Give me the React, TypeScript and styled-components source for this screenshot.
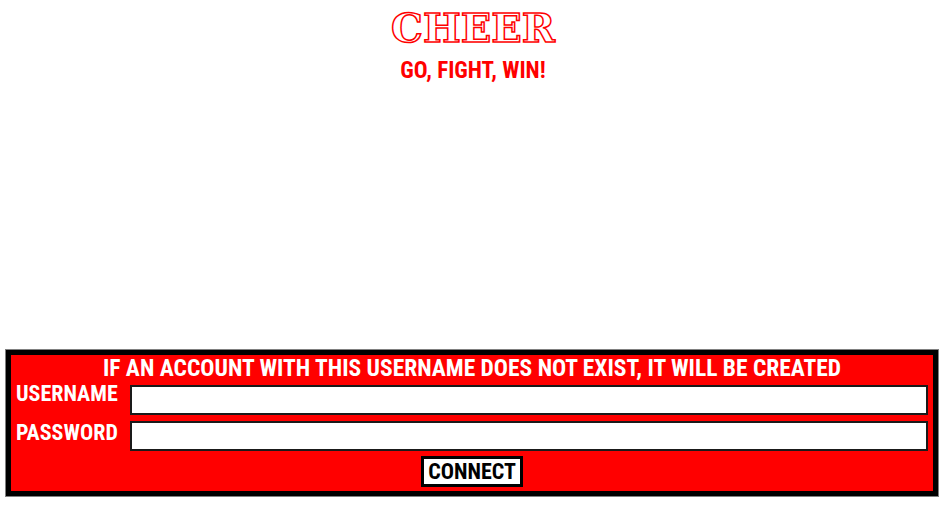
import styled, { createGlobalStyle } from "styled-components";

const GlobalStyle = createGlobalStyle`
  html, body {
    margin: 0;
    padding: 0;
    background: #ffffff;
  }
  body {
    font-family: "Roboto Condensed", Roboto, sans-serif;
    font-weight: 700;
  }
  #root {
    height: 100vh;
  }
`;

const Page = styled.div`
  height: 100%;
  display: flex;
  flex-direction: column;
`;

const Header = styled.header`
  display: flex;
  flex-direction: column;
  align-items: center;
`;

// slab face with clean contours so the outline stroke has no inner seams
const Title = styled.h1`
  margin: 0;
  font-family: "DejaVu Serif", serif;
  font-size: 40px;
  line-height: 56px;
  font-weight: 700;
  color: #ffffff;
  -webkit-text-stroke: 1.5px #ff0000;
`;

const Subtitle = styled.h2`
  margin: 3px 0 0;
  font-size: 23px;
  line-height: 24px;
  font-weight: 700;
  color: #ff0000;
`;

const Panel = styled.form`
  margin: auto 8px 15px 6px;
  background: #ff0000;
  border: 5px solid #000000;
  box-shadow: 0 0 0 1px #808080;
  padding: 1px 5px 4px 5px;
  display: flex;
  flex-direction: column;
`;

const Notice = styled.div`
  text-align: center;
  color: #ffffff;
  font-size: 23.5px;
  line-height: 24px;
  white-space: nowrap;
  margin-bottom: 5px;
`;

const Row = styled.label<{ $drop: number }>`
  display: grid;
  grid-template-columns: 114px 1fr;
  align-items: start;
  margin-bottom: 6px;

  & > span {
    padding-top: ${(p) => p.$drop}px;
  }
`;

const Label = styled.span`
  color: #ffffff;
  font-size: 22px;
  line-height: 17px;
  white-space: nowrap;
`;

const Input = styled.input`
  box-sizing: border-box;
  height: 30px;
  width: 100%;
  border: 2px solid #1a1a1a;
  background: #ffffff;
  padding: 0 6px;
  font-size: 16px;
  outline: none;
  caret-color: #000000;
`;

const Button = styled.button`
  align-self: center;
  box-sizing: border-box;
  margin-top: -1px;
  width: 102px;
  height: 31px;
  background: #ffffff;
  border: 3px solid #000000;
  color: #000000;
  font-family: "Roboto Condensed", Roboto, sans-serif;
  font-size: 22px;
  font-weight: 700;
  padding: 0;
  cursor: pointer;
`;

export default function App() {
  return (
    <Page>
      <GlobalStyle />
      <Header>
        <Title>CHEER</Title>
        <Subtitle>GO, FIGHT, WIN!</Subtitle>
      </Header>
      <Panel onSubmit={(e) => e.preventDefault()}>
        <Notice>IF AN ACCOUNT WITH THIS USERNAME DOES NOT EXIST, IT WILL BE CREATED</Notice>
        <Row $drop={0}>
          <Label>USERNAME</Label>
          <Input type="text" autoFocus />
        </Row>
        <Row $drop={3}>
          <Label>PASSWORD</Label>
          <Input type="password" />
        </Row>
        <Button type="submit">CONNECT</Button>
      </Panel>
    </Page>
  );
}
